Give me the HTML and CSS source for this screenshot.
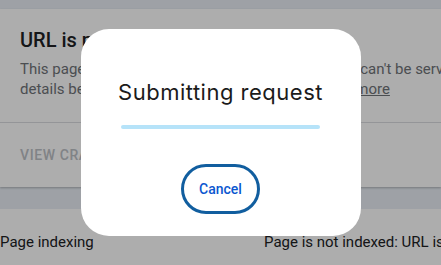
FILE: index.html
```html
<!DOCTYPE html>
<html lang="en">
<head>
<meta charset="utf-8">
<title>Submitting request</title>
<link rel="stylesheet" href="styles.css">
</head>
<body>
<div class="page">
  <div class="topbar"></div>
  <section class="card">
    <div class="card-body">
      <h2 class="card-title">URL is not on Google</h2>
      <p class="card-text">This page is not indexed. Pages that aren't indexed can't be served on Google. See the<br>details below to learn why it wasn't indexed. <a class="link" href="#">Learn more</a></p>
    </div>
    <div class="card-actions">
      <span class="text-btn">VIEW CRAWLED PAGE</span>
    </div>
  </section>
  <div class="band"></div>
  <div class="row">
    <span class="row-label">Page indexing</span>
    <span class="row-value">Page is not indexed: URL is not on Google</span>
  </div>
</div>

<div class="scrim">
  <div class="dialog" role="dialog" aria-label="Submitting request">
    <h1 class="dialog-title">Submitting request</h1>
    <div class="progress"></div>
    <div class="dialog-actions">
      <button class="cancel-btn" type="button">Cancel</button>
    </div>
  </div>
</div>
</body>
</html>
```

FILE: styles.css
```css
html, body {
  margin: 0;
  padding: 0;
  background: #ffffff;
  font-family: Roboto, "Liberation Sans", Arial, sans-serif;
  color: #202124;
  overflow: hidden;
}

.page {
  width: 441px;
  height: 265px;
  overflow: hidden;
}

.topbar {
  height: 9px;
  background: #e9eef5;
}

.card {
  background: #ffffff;
  box-shadow: 0 1px 2px rgba(60, 64, 67, 0.35);
  position: relative;
}

.card-body {
  padding: 17px 20px 0 20px;
  height: 96px;
  border-bottom: 1px solid #dadce0;
  white-space: nowrap;
  overflow: hidden;
}

.card-title {
  margin: 0 0 5px 0;
  font-size: 20px;
  line-height: 28px;
  font-weight: 500;
  color: #202124;
}

.card-text {
  margin: 0;
  font-size: 15px;
  line-height: 20px;
  color: #6f7378;
}

.link {
  color: #6f7378;
  text-decoration: underline;
}

.card-actions {
  padding: 22px 20px;
}

.text-btn {
  display: block;
  font-size: 14px;
  line-height: 20px;
  font-weight: 500;
  letter-spacing: 0.6px;
  color: #bdc1c6;
}

.band {
  height: 22px;
  background: #e9eef5;
}

.row {
  display: grid;
  grid-template-columns: 264px 177px;
  padding-top: 23px;
  font-size: 15px;
  line-height: 20px;
  color: #202124;
  white-space: nowrap;
  overflow: hidden;
}

.row-value {
  overflow: hidden;
}

.scrim {
  position: fixed;
  inset: 0;
  background: rgba(0, 0, 0, 0.32);
  display: flex;
  align-items: center;
  justify-content: center;
}

.dialog {
  width: 280px;
  height: 207px;
  box-sizing: border-box;
  background: #ffffff;
  border-radius: 28px;
  padding: 49px 20px 22px 20px;
  display: flex;
  flex-direction: column;
  align-items: center;
}

.dialog-title {
  margin: 0;
  font-family: Inter, Roboto, "Liberation Sans", sans-serif;
  font-size: 22px;
  line-height: 28px;
  font-weight: 400;
  letter-spacing: 0.5px;
  color: #1b1b1b;
  white-space: nowrap;
}

.progress {
  width: 199px;
  height: 4px;
  border-radius: 2px;
  background: #b6e3f9;
  margin-top: 19px;
}

.dialog-actions {
  margin-top: auto;
  display: flex;
  justify-content: center;
}

.cancel-btn {
  height: 50px;
  box-sizing: border-box;
  padding: 0 15px;
  border: 3px solid #115e9f;
  border-radius: 25px;
  background: #ffffff;
  font-family: Roboto, "Liberation Sans", Arial, sans-serif;
  font-size: 14px;
  font-weight: 500;
  color: #0b57d0;
  cursor: pointer;
}
```
